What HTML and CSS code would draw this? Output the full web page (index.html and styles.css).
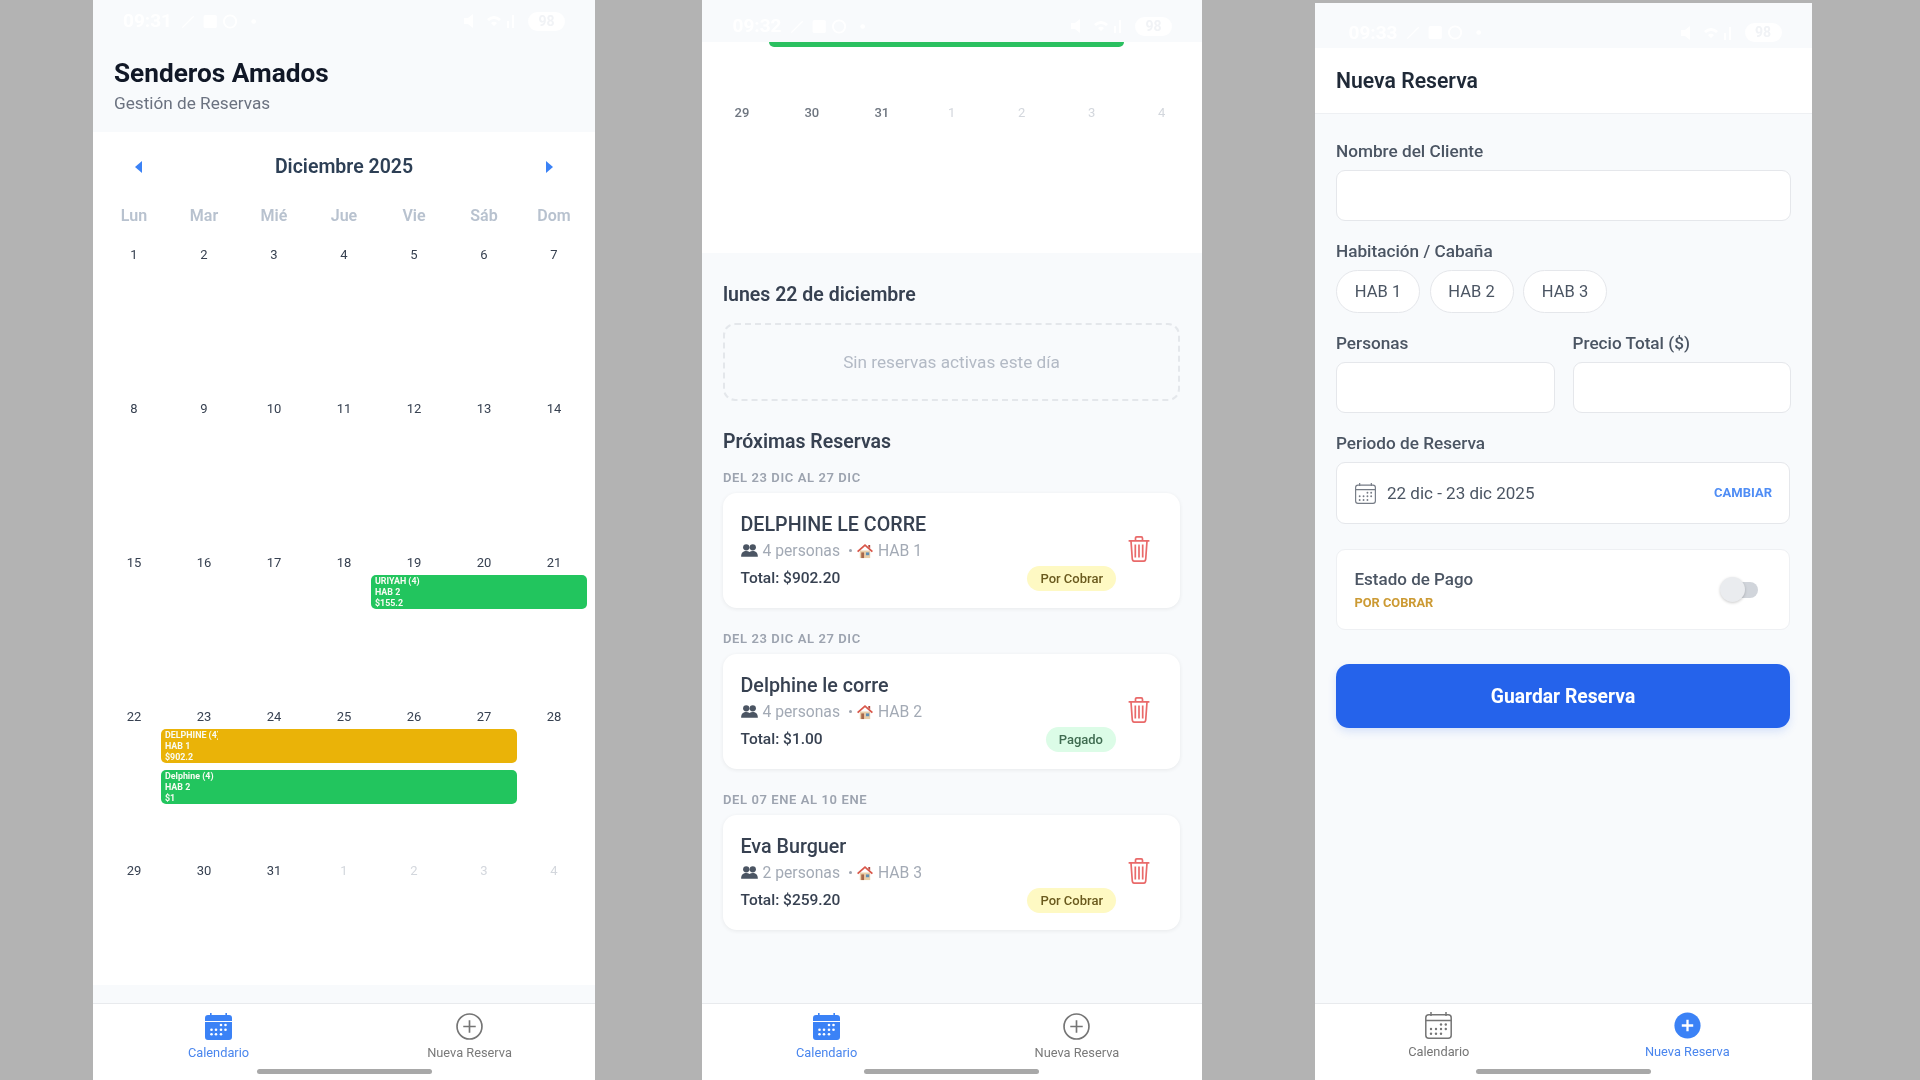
FILE: index.html
```html
<!DOCTYPE html>
<html lang="es">
<head>
<meta charset="utf-8">
<title>Senderos Amados</title>
<link rel="stylesheet" href="styles.css">
</head>
<body>
<svg class="defs" width="0" height="0" aria-hidden="true">
  <symbol id="cal-fill" viewBox="0 0 27 27">
    <rect x="5" y="0" width="1.6" height="4" fill="#3b82f6"/><rect x="20.4" y="0" width="1.6" height="4" fill="#3b82f6"/>
    <path d="M3 2h21a3 3 0 0 1 3 3v3H0V5a3 3 0 0 1 3-3zM0 9h27v15a3 3 0 0 1-3 3H3a3 3 0 0 1-3-3z" fill="#3b82f6"/>
    <g fill="#fff"><circle cx="16" cy="12" r="1.3"/><circle cx="20.5" cy="12" r="1.3"/><circle cx="6.5" cy="16.7" r="1.3"/><circle cx="11" cy="16.7" r="1.3"/><circle cx="16" cy="16.7" r="1.3"/><circle cx="20.5" cy="16.7" r="1.3"/><circle cx="6.5" cy="21.3" r="1.3"/><circle cx="11" cy="21.3" r="1.3"/><circle cx="16" cy="21.3" r="1.3"/></g>
  </symbol>
  <symbol id="cal-line" viewBox="0 0 27 27">
    <g fill="none" stroke="currentColor" stroke-width="1.5"><rect x=".8" y="2.8" width="25.4" height="23.4" rx="3"/><path d="M.8 8.5h25.4M6 0v4M21 0v4"/></g>
    <g fill="currentColor"><circle cx="16" cy="12.5" r="1.2"/><circle cx="20.8" cy="12.5" r="1.2"/><circle cx="6" cy="17" r="1.2"/><circle cx="11" cy="17" r="1.2"/><circle cx="16" cy="17" r="1.2"/><circle cx="20.8" cy="17" r="1.2"/><circle cx="6" cy="21.8" r="1.2"/><circle cx="11" cy="21.8" r="1.2"/><circle cx="16" cy="21.8" r="1.2"/></g>
  </symbol>
  <symbol id="plus-line" viewBox="0 0 26 26">
    <circle cx="13" cy="13" r="12" fill="none" stroke="#757575" stroke-width="1.6"/><path d="M7 13h12M13 7v12" stroke="#757575" stroke-width="1.6"/>
  </symbol>
  <symbol id="plus-fill" viewBox="0 0 26 26">
    <circle cx="13" cy="13" r="12.6" fill="#3b82f6"/><path d="M7.5 13h11M13 7.5v11" stroke="#fff" stroke-width="2.2"/>
  </symbol>
  <symbol id="trash" viewBox="0 0 22 26">
    <g fill="none" stroke="#e96a6a" stroke-width="1.7" stroke-linejoin="round"><path d="M.6 4.800h20.800M7.500 4.500V2.200q0-1.300 1.300-1.300h4.400q1.300 0 1.300 1.300v2.300M3 5l1.300 18.200q.2 2 2.200 2h9q2 0 2.200-2L19 5M7.300 8.500v13M11 8.500v13M14.700 8.500v13"/></g>
  </symbol>
  <symbol id="people" viewBox="0 0 18 14">
    <g fill="#4b5563"><circle cx="5.500" cy="3.600" r="3.400"/><circle cx="12.500" cy="3.600" r="3.400"/><path d="M0 13.800c0-4.800 2.500-6.300 5.500-6.300 1.500 0 2.700.4 3.500 1.200.8-.8 2-1.200 3.500-1.200 3 0 5.500 1.500 5.500 6.300z"/></g>
  </symbol>
  <symbol id="house" viewBox="0 0 17 16">
    <path d="M3 7.500h11V15.500H3z" fill="#e9cfa9"/><path d="M8.500.5 0 8l1.300 1.200 7.200-6.200 7.200 6.200L17 8z" fill="#d9574a"/><path d="M12 1.500h2v3.500l-2-1.600z" fill="#b3493f"/>
    <rect x="4.500" y="9.500" width="3" height="6" fill="#a8684a"/><rect x="9.500" y="9.500" width="3.500" height="3" fill="#5d8fb5"/>
  </symbol>
  <symbol id="status-left" viewBox="0 0 90 18">
    <g fill="#fff"><path d="M2 15 14 3l1 1L3 16z"/><rect x="25" y="2" width="14" height="14" rx="2"/><circle cx="53" cy="9" r="6.500" fill="none" stroke="#fff" stroke-width="2"/><circle cx="78" cy="9" r="2.500"/></g>
  </symbol>
  <symbol id="status-right" viewBox="0 0 56 18">
    <g fill="#fff"><path d="M1 6h4l5-4v14l-5-4H1z"/><path d="M24 7q7-6 14 0l-2 2q-5-4-10 0zM28 11q3-2.500 6 0l-3 3z"/><rect x="44" y="9" width="2" height="7"/><rect x="49" y="3" width="2" height="13"/></g>
  </symbol>
  <symbol id="caret-left" viewBox="0 0 7 12"><path d="M7 0v12L0 6z" fill="#3b82f6"/></symbol>
  <symbol id="caret-right" viewBox="0 0 7 12"><path d="M0 0v12l7-6z" fill="#3b82f6"/></symbol>
</svg>

<section class="phone phone-a">
  <div class="status">
    <span class="status-time">09:31</span>
    <svg class="status-left"><use href="#status-left"/></svg>
    <svg class="status-right"><use href="#status-right"/></svg>
    <span class="status-pill">98</span>
  </div>
  <header class="app-head">
    <h1 class="app-title">Senderos Amados</h1>
    <p class="app-sub">Gestión de Reservas</p>
  </header>
  <main class="main main-cal">
    <div class="calendar">
      <div class="month">
        <svg class="caret"><use href="#caret-left"/></svg>
        <span class="month-name">Diciembre 2025</span>
        <svg class="caret"><use href="#caret-right"/></svg>
      </div>
      <div class="weekdays">
        <span>Lun</span><span>Mar</span><span>Mié</span><span>Jue</span><span>Vie</span><span>Sáb</span><span>Dom</span>
      </div>
      <div class="week"><span class="day">1</span><span class="day">2</span><span class="day">3</span><span class="day">4</span><span class="day">5</span><span class="day">6</span><span class="day">7</span></div>
      <div class="week"><span class="day">8</span><span class="day">9</span><span class="day">10</span><span class="day">11</span><span class="day">12</span><span class="day">13</span><span class="day">14</span></div>
      <div class="week">
        <span class="day">15</span><span class="day">16</span><span class="day">17</span><span class="day">18</span><span class="day">19</span><span class="day">20</span><span class="day">21</span>
        <div class="bar bar-green span-5-7"><span class="bar-line">URIYAH (4)</span><span class="bar-line">HAB 2</span><span class="bar-line">$155.2</span></div>
      </div>
      <div class="week">
        <span class="day">22</span><span class="day">23</span><span class="day">24</span><span class="day">25</span><span class="day">26</span><span class="day">27</span><span class="day">28</span>
        <div class="bar bar-yellow span-2-6"><span class="bar-line">DELPHINE (4)</span><span class="bar-line">HAB 1</span><span class="bar-line">$902.2</span></div>
        <div class="bar bar-green bar-next span-2-6"><span class="bar-line">Delphine (4)</span><span class="bar-line">HAB 2</span><span class="bar-line">$1</span></div>
      </div>
      <div class="week">
        <span class="day">29</span><span class="day">30</span><span class="day">31</span><span class="day muted">1</span><span class="day muted">2</span><span class="day muted">3</span><span class="day muted">4</span>
      </div>
    </div>
  </main>
  <nav class="tabs">
    <div class="tab tab-on"><svg class="tab-icon"><use href="#cal-fill"/></svg><span>Calendario</span></div>
    <div class="tab"><svg class="tab-icon"><use href="#plus-line"/></svg><span>Nueva Reserva</span></div>
    <i class="home-bar"></i>
  </nav>
</section>

<section class="phone phone-b">
  <div class="status">
    <span class="status-time">09:32</span>
    <svg class="status-left"><use href="#status-left"/></svg>
    <svg class="status-right"><use href="#status-right"/></svg>
    <span class="status-pill">98</span>
  </div>
  <div class="cal-tail">
    <div class="stub-row"><div class="bar-stub span-2-6"></div></div>
    <div class="week week-tail">
      <span class="day day-dim">29</span><span class="day day-dim">30</span><span class="day day-dim">31</span><span class="day muted">1</span><span class="day muted">2</span><span class="day muted">3</span><span class="day muted">4</span>
    </div>
  </div>
  <main class="main agenda">
    <h2 class="agenda-title">lunes 22 de diciembre</h2>
    <div class="empty-box">Sin reservas activas este día</div>
    <h2 class="agenda-title agenda-next">Próximas Reservas</h2>

    <p class="range">DEL 23 DIC AL 27 DIC</p>
    <article class="card">
      <div class="card-body">
        <h3 class="card-name">DELPHINE LE CORRE</h3>
        <div class="card-meta"><svg class="ic-people"><use href="#people"/></svg><span>4 personas</span><i class="meta-dot"></i><svg class="ic-house"><use href="#house"/></svg><span>HAB 1</span></div>
        <div class="card-foot"><span class="total">Total: $902.20</span><span class="badge badge-due">Por Cobrar</span></div>
      </div>
      <svg class="ic-trash"><use href="#trash"/></svg>
    </article>

    <p class="range">DEL 23 DIC AL 27 DIC</p>
    <article class="card">
      <div class="card-body">
        <h3 class="card-name">Delphine le corre</h3>
        <div class="card-meta"><svg class="ic-people"><use href="#people"/></svg><span>4 personas</span><i class="meta-dot"></i><svg class="ic-house"><use href="#house"/></svg><span>HAB 2</span></div>
        <div class="card-foot"><span class="total">Total: $1.00</span><span class="badge badge-paid">Pagado</span></div>
      </div>
      <svg class="ic-trash"><use href="#trash"/></svg>
    </article>

    <p class="range">DEL 07 ENE AL 10 ENE</p>
    <article class="card">
      <div class="card-body">
        <h3 class="card-name">Eva Burguer</h3>
        <div class="card-meta"><svg class="ic-people"><use href="#people"/></svg><span>2 personas</span><i class="meta-dot"></i><svg class="ic-house"><use href="#house"/></svg><span>HAB 3</span></div>
        <div class="card-foot"><span class="total">Total: $259.20</span><span class="badge badge-due">Por Cobrar</span></div>
      </div>
      <svg class="ic-trash"><use href="#trash"/></svg>
    </article>
  </main>
  <nav class="tabs">
    <div class="tab tab-on"><svg class="tab-icon"><use href="#cal-fill"/></svg><span>Calendario</span></div>
    <div class="tab"><svg class="tab-icon"><use href="#plus-line"/></svg><span>Nueva Reserva</span></div>
    <i class="home-bar"></i>
  </nav>
</section>

<section class="phone phone-c">
  <div class="status">
    <span class="status-time">09:33</span>
    <svg class="status-left"><use href="#status-left"/></svg>
    <svg class="status-right"><use href="#status-right"/></svg>
    <span class="status-pill">98</span>
  </div>
  <header class="form-head"><h1 class="form-title">Nueva Reserva</h1></header>
  <main class="main form">
    <label class="field-label">Nombre del Cliente</label>
    <div class="input"></div>

    <label class="field-label">Habitación / Cabaña</label>
    <div class="chips"><span class="chip">HAB 1</span><span class="chip">HAB 2</span><span class="chip">HAB 3</span></div>

    <div class="two-col">
      <div class="col-first"><label class="field-label">Personas</label><div class="input"></div></div>
      <div class="col-second"><label class="field-label">Precio Total ($)</label><div class="input"></div></div>
    </div>

    <label class="field-label">Periodo de Reserva</label>
    <div class="date-box">
      <svg class="ic-date"><use href="#cal-line"/></svg>
      <span class="date-text">22 dic - 23 dic 2025</span>
      <span class="date-change">CAMBIAR</span>
    </div>

    <div class="pay-box">
      <div class="pay-text"><span class="pay-title">Estado de Pago</span><span class="pay-state">POR COBRAR</span></div>
      <div class="toggle"><i class="toggle-thumb"></i></div>
    </div>

    <button class="save" type="button">Guardar Reserva</button>
  </main>
  <nav class="tabs">
    <div class="tab tab-off"><svg class="tab-icon"><use href="#cal-line"/></svg><span>Calendario</span></div>
    <div class="tab tab-on"><svg class="tab-icon"><use href="#plus-fill"/></svg><span>Nueva Reserva</span></div>
    <i class="home-bar"></i>
  </nav>
</section>
</body>
</html>
```

FILE: styles.css
```css
* { box-sizing: border-box; }
html, body { margin: 0; height: 1080px; overflow: hidden; }
body {
  display: flex;
  align-items: flex-start;
  background: #b3b3b3;
  font-family: Roboto, "Liberation Sans", sans-serif;
  color: #374151;
}
.defs { position: absolute; }
h1, h2, h3, p { margin: 0; }

/* Phone frames */
.phone {
  display: flex;
  flex-direction: column;
  height: 1080px;
  background: #f8fafc;
  overflow: hidden;
  filter: blur(.45px);
}
.phone-a { width: 502px; margin-left: 93px; }
.phone-b { width: 500.5px; margin-left: 106.5px; filter: blur(.7px); }
.phone-c { width: 497px; height: 1077px; margin-left: 112.5px; margin-top: 3px; }

/* Status bar */
.status {
  flex: none;
  display: flex;
  align-items: center;
  height: 42px;
  padding: 0 30px;
  color: #fff;
}
.phone-b .status { padding: 10px 30px 0 31px; }
.phone-c .status { height: 45px; padding: 14px 30px 0 34px; }
.status-time { font-size: 19px; font-weight: 700; line-height: 20px; }
.status-left { width: 85px; height: 17px; margin-left: 8px; }
.status-right { width: 56px; height: 18px; margin-left: auto; margin-right: 9px; }
.status-pill {
  width: 37px;
  height: 19px;
  border-radius: 10px;
  background: #fff;
  color: #f1f3f6;
  font-size: 14px;
  font-weight: 700;
  line-height: 19px;
  text-align: center;
}

/* App header */
.app-head { flex: none; height: 90px; padding: 15px 21px 0; }
.app-title { font-size: 26.2px; font-weight: 700; line-height: 32px; color: #111827; }
.app-sub { margin-top: 3px; font-size: 17.2px; line-height: 22px; color: #6b7280; }

.main { flex: 1; min-height: 0; }
.main-cal { display: flex; flex-direction: column; padding-bottom: 18px; }

/* Calendar */
.calendar { flex: 1; min-height: 0; overflow: hidden; background: #fff; padding: 20px 6px 0; }
.month { display: flex; align-items: center; justify-content: space-between; height: 29px; padding: 0 36px; }
.caret { width: 7px; height: 12px; }
.month-name { font-size: 19.5px; font-weight: 600; color: #2d3f55; }
.weekdays {
  display: grid;
  grid-template-columns: repeat(7, 1fr);
  margin-top: 25px;
  height: 20px;
  margin-bottom: 14px;
  font-size: 16px;
  font-weight: 600;
  line-height: 20px;
  color: #b8c2cf;
  text-align: center;
}
.week {
  display: grid;
  grid-template-columns: repeat(7, 1fr);
  align-content: start;
  height: 154px;
  padding-top: 7px;
}
.day { font-size: 13px; line-height: 16px; text-align: center; color: #374151; }
.day.muted { color: #d3d7dd; }
.day-dim { color: #6f7680; font-weight: 500; }

/* Event bars */
.bar {
  height: 34px;
  margin: 4px 2.5px 0 -8px;
  padding: 1px 4px;
  border-radius: 5px;
  font-size: 8.9px;
  font-weight: 700;
  line-height: 10.9px;
  color: #f8fbf3;
}
.bar-green { background: #22c55e; }
.bar-yellow { background: #eab308; }
.bar-next { margin-top: 7px; }
.bar-line { display: block; width: 53px; overflow: hidden; white-space: nowrap; }
.span-5-7 { grid-column: 5 / 8; }
.span-2-6 { grid-column: 2 / 7; }

/* Tab bar */
.tabs {
  position: relative;
  flex: none;
  display: flex;
  height: 77px;
  background: #fff;
  border-top: 1px solid #e8eaed;
}
.tab {
  flex: 1;
  display: flex;
  flex-direction: column;
  align-items: center;
  padding-top: 9px;
  font-size: 12.8px;
  font-weight: 400;
  line-height: 16px;
  color: #7a7a7a;
}
.tab-icon { width: 27px; height: 27px; margin-bottom: 5px; }
.tab-on { color: #4a86ee; }
.tab-off { color: #757575; }
.phone-c .tab { padding-top: 8px; }
.home-bar {
  position: absolute;
  left: 50%;
  bottom: 6px;
  width: 175px;
  height: 5px;
  margin-left: -87.5px;
  border-radius: 3px;
  background: #a8a8a8;
}

/* Scrolled calendar tail */
.cal-tail { flex: none; height: 211px; background: #fff; padding: 0 5.5px; }
.stub-row { display: grid; grid-template-columns: repeat(7, 1fr); }
.bar-stub {
  height: 5px;
  margin: 0 2.5px 0 -8px;
  border-radius: 0 0 5px 5px;
  background: #2ac060;
}
.week-tail { padding-top: 58px; height: auto; }

/* Agenda */
.agenda { padding: 29.5px 22px 0 21.5px; }
.agenda-title { font-size: 19.5px; font-weight: 600; line-height: 24px; color: #374151; }
.empty-box {
  display: flex;
  align-items: center;
  justify-content: center;
  height: 78px;
  margin-top: 16.5px;
  border: 2px dashed #e4e7eb;
  border-radius: 12px;
  font-size: 17.2px;
  color: #b3bac5;
}
.agenda-next { margin-top: 29px; margin-bottom: 16px; }
.range {
  height: 16px;
  margin-bottom: 7px;
  font-size: 13px;
  font-weight: 600;
  line-height: 16px;
  letter-spacing: .6px;
  color: #9ca3af;
}
.card {
  display: flex;
  align-items: center;
  height: 115px;
  margin-bottom: 23px;
  padding: 18px 30px 18px 17.5px;
  background: #fff;
  border-radius: 14px;
  box-shadow: 0 1px 4px rgba(0, 0, 0, .07);
}
.card-body { flex: 1; padding-top: 1.5px; }
.card-name { font-size: 19.7px; font-weight: 500; line-height: 26px; color: #374151; }
.card-meta { display: flex; align-items: center; height: 22px; margin-top: 1.5px; font-size: 15.7px; color: #a3aab5; }
.ic-people { width: 17px; height: 13px; margin-right: 5px; }
.meta-dot { width: 3px; height: 3px; margin: 0 5px 0 9px; border-radius: 50%; background: #9ca3af; }
.ic-house { width: 16px; height: 16px; margin-right: 5px; }
.card-foot { display: flex; align-items: center; justify-content: space-between; margin-top: 4px; }
.total { font-size: 15.5px; font-weight: 500; color: #374151; }
.badge { height: 25px; padding: 0 13px; border-radius: 13px; font-size: 13px; font-weight: 500; line-height: 25px; }
.badge-due { background: #fef9c3; color: #6a5a1e; }
.badge-paid { background: #dcfce7; color: #3f6b50; }
.ic-trash { flex: none; width: 22px; height: 26px; margin: -2.5px 0 0 12px; }

/* Form */
.form-head { flex: none; height: 65.5px; padding-top: 17px; background: #fff; border-bottom: 1.5px solid #eef0f3; }
.form-title { padding-left: 21.5px; font-size: 21.2px; font-weight: 600; line-height: 32px; color: #1f2937; }
.form { display: flex; flex-direction: column; padding: 27px 20.5px 0 21.5px; }
.field-label { display: block; height: 22px; margin-bottom: 7.5px; font-size: 17.2px; font-weight: 500; line-height: 20.5px; color: #4b5563; }
.input { height: 51px; background: #fff; border: 1px solid #e5e7eb; border-radius: 9px; margin-bottom: 19.5px; }
.chips { display: flex; gap: 9.5px; margin-bottom: 19.5px; }
.chip {
  width: 84px;
  height: 43px;
  background: #fff;
  border: 1px solid #e5e7eb;
  border-radius: 22px;
  font-size: 16.5px;
  line-height: 42px;
  text-align: center;
  color: #4b5563;
}
.two-col { display: flex; gap: 18px; }
.col-first, .col-second { flex: 1; }
.date-box {
  display: flex;
  align-items: center;
  height: 62px;
  margin-right: 1px;
  padding: 0 18px;
  background: #fff;
  border: 1px solid #e5e7eb;
  border-radius: 9px;
}
.ic-date { width: 21px; height: 21px; margin-right: 11px; color: #757b85; }
.date-text { flex: 1; font-size: 17px; color: #4b5563; }
.date-change { font-size: 13px; font-weight: 700; color: #4f8df5; margin: -1px -1px 0 0; }
.pay-box {
  display: flex;
  align-items: center;
  justify-content: space-between;
  height: 81px;
  margin: 25px 1px 0 0;
  padding: 0 31px 0 17.5px;
  background: #fff;
  border: 1px solid #eef0f3;
  border-radius: 9px;
}
.pay-text { display: flex; flex-direction: column; }
.pay-title { font-size: 17px; font-weight: 500; line-height: 24px; color: #4b5563; margin-top: -2px; }
.pay-state { margin-top: 4px; font-size: 12.8px; font-weight: 700; line-height: 16px; color: #cc9a33; }
.toggle { position: relative; width: 35px; height: 16px; border-radius: 8px; background: #d1d5db; }
.toggle-thumb {
  position: absolute;
  left: -3.5px;
  top: -4.5px;
  width: 25px;
  height: 25px;
  border-radius: 50%;
  background: #eaecef;
  box-shadow: 0 1px 3px rgba(0, 0, 0, .2);
}
.save {
  flex: none;
  height: 64px;
  margin: 34px 1px 0 0;
  border: 0;
  border-radius: 13px;
  background: #2563eb;
  box-shadow: 0 4px 8px rgba(37, 99, 235, .15);
  font-family: inherit;
  font-size: 19.3px;
  font-weight: 700;
  color: #fff;
}
```
